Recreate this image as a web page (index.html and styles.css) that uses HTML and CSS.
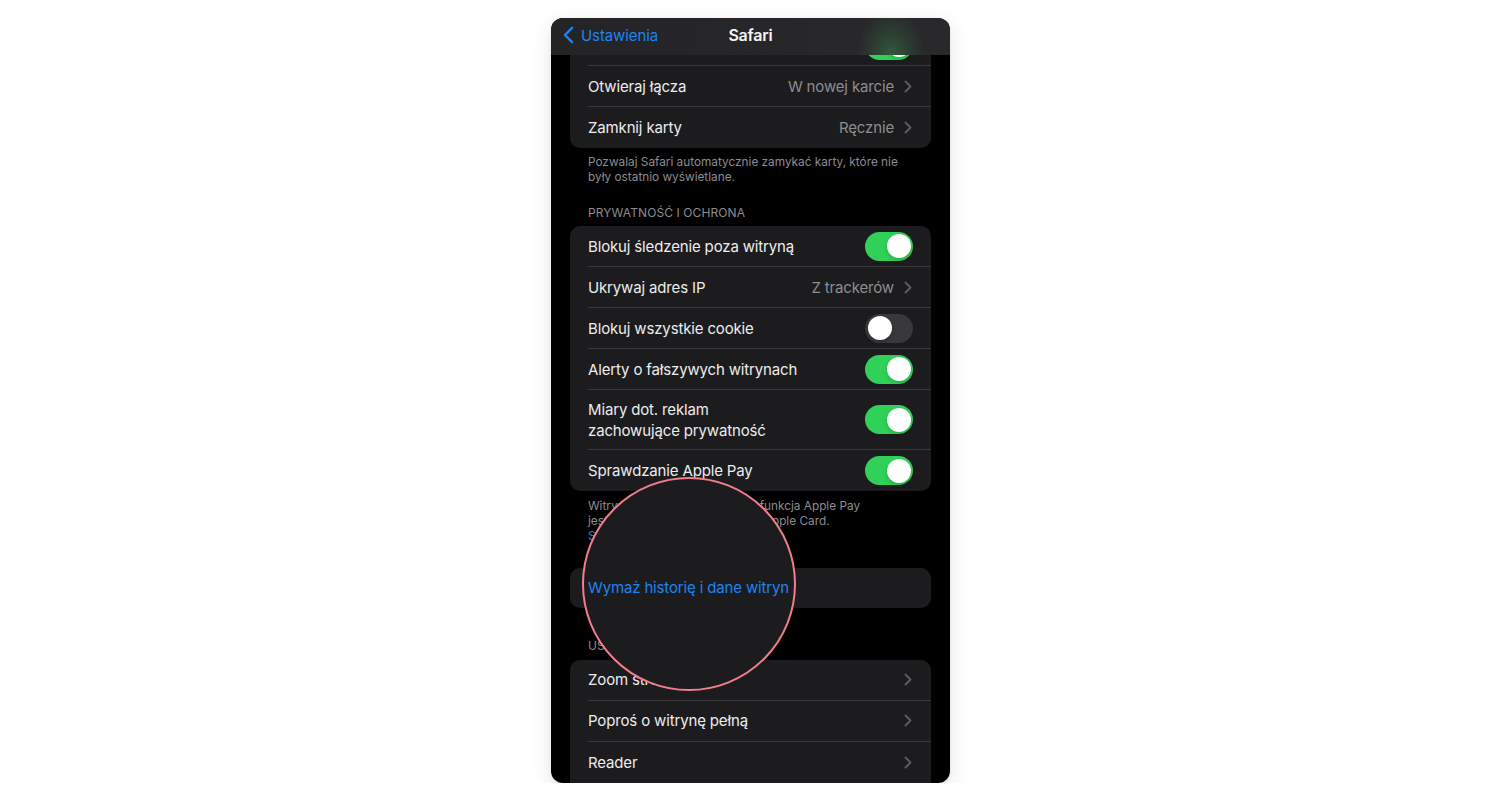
FILE: index.html
```html
<!DOCTYPE html>
<html lang="pl">
<head>
<meta charset="utf-8">
<title>Safari – Ustawienia</title>
<link rel="stylesheet" href="styles.css">
</head>
<body>
<div class="phone">
  <main class="content">
    <section class="group group-first">
      <div class="card">
        <div class="row"><div class="cell"><span class="label"></span><span class="toggle on" aria-label="Pokazuj ikony na kartach"></span></div></div>
        <div class="row"><div class="cell"><span class="label">Otwieraj łącza</span><span class="detail"><span class="value">W nowej karcie</span><svg class="chev" viewBox="0 0 8 13" width="8" height="13"><polyline points="1.5,1.5 6.5,6.5 1.5,11.5"/></svg></span></div></div>
        <div class="row"><div class="cell"><span class="label">Zamknij karty</span><span class="detail"><span class="value">Ręcznie</span><svg class="chev" viewBox="0 0 8 13" width="8" height="13"><polyline points="1.5,1.5 6.5,6.5 1.5,11.5"/></svg></span></div></div>
      </div>
      <p class="footer">Pozwalaj Safari automatycznie zamykać karty, które nie były ostatnio wyświetlane.</p>
    </section>

    <section class="group group-privacy">
      <h2 class="group-header">Prywatność i ochrona</h2>
      <div class="card">
        <div class="row"><div class="cell"><span class="label">Blokuj śledzenie poza witryną</span><span class="toggle on"></span></div></div>
        <div class="row"><div class="cell"><span class="label">Ukrywaj adres IP</span><span class="detail"><span class="value">Z trackerów</span><svg class="chev" viewBox="0 0 8 13" width="8" height="13"><polyline points="1.5,1.5 6.5,6.5 1.5,11.5"/></svg></span></div></div>
        <div class="row"><div class="cell"><span class="label">Blokuj wszystkie cookie</span><span class="toggle"></span></div></div>
        <div class="row"><div class="cell"><span class="label">Alerty o fałszywych witrynach</span><span class="toggle on"></span></div></div>
        <div class="row row-tall"><div class="cell"><span class="label">Miary dot. reklam<br>zachowujące prywatność</span><span class="toggle on"></span></div></div>
        <div class="row"><div class="cell"><span class="label">Sprawdzanie Apple Pay</span><span class="toggle on"></span></div></div>
      </div>
      <p class="footer">Witryny mogą sprawdzać, czy funkcja Apple Pay<br>jest włączona i czy masz konto Apple Card.<br><span class="link">Safari i prywatność…</span></p>
    </section>

    <section class="group group-clear">
      <div class="card">
        <div class="row row-short"><div class="cell"><span class="label action">Wymaż historię i dane witryn</span></div></div>
      </div>
    </section>

    <section class="group group-sites">
      <h2 class="group-header">Ustawienia dla witryn</h2>
      <div class="card">
        <div class="row"><div class="cell"><span class="label">Zoom strony</span><span class="detail"><svg class="chev" viewBox="0 0 8 13" width="8" height="13"><polyline points="1.5,1.5 6.5,6.5 1.5,11.5"/></svg></span></div></div>
        <div class="row"><div class="cell"><span class="label">Poproś o witrynę pełną</span><span class="detail"><svg class="chev" viewBox="0 0 8 13" width="8" height="13"><polyline points="1.5,1.5 6.5,6.5 1.5,11.5"/></svg></span></div></div>
        <div class="row"><div class="cell"><span class="label">Reader</span><span class="detail"><svg class="chev" viewBox="0 0 8 13" width="8" height="13"><polyline points="1.5,1.5 6.5,6.5 1.5,11.5"/></svg></span></div></div>
      </div>
    </section>
  </main>

  <header class="navbar">
    <a class="back">
      <svg class="back-chev" viewBox="0 0 12 20" width="12" height="20"><polyline points="10,2 2,10 10,18"/></svg>
      <span>Ustawienia</span>
    </a>
    <div class="title">Safari</div>
    <div></div>
  </header>

  <div class="spotlight"></div>
</div>
</body>
</html>
```

FILE: styles.css
```css
* { box-sizing: border-box; }

html, body {
  margin: 0;
  padding: 0;
  background: #ffffff;
}

body {
  font-family: Inter, "Noto Sans", "Liberation Sans", sans-serif;
  -webkit-font-smoothing: antialiased;
}

.phone {
  position: relative;
  width: 399px;
  height: 765px;
  margin: 18px 0 0 551px;
  background: #000000;
  border-radius: 12px;
  overflow: hidden;
  box-shadow: 0 6px 22px rgba(0, 0, 0, 0.10), 0 1px 4px rgba(0, 0, 0, 0.06);
}

/* ---------- navigation bar ---------- */
.navbar {
  position: absolute;
  top: 0;
  left: 0;
  right: 0;
  height: 37px;
  padding-bottom: 3px;
  display: grid;
  grid-template-columns: 1fr auto 1fr;
  align-items: center;
  background:
    radial-gradient(ellipse 34px 46px at 340px 100%, rgba(70, 190, 100, 0.32), rgba(70, 190, 100, 0.11) 60%, rgba(70, 190, 100, 0) 100%),
    linear-gradient(90deg, #242426 0%, #29292b 100%);
  z-index: 5;
}

.back {
  display: flex;
  align-items: center;
  gap: 7px;
  padding-left: 12px;
  color: #1e84f0;
  font-size: 15px;
  letter-spacing: -0.1px;
}

.back-chev {
  width: 11px;
  height: 18px;
  fill: none;
  stroke: #1e84f0;
  stroke-width: 2.6;
  stroke-linecap: round;
  stroke-linejoin: round;
}

.title {
  color: #f5f5f7;
  font-size: 16px;
  font-weight: 600;
  letter-spacing: -0.2px;
}

/* ---------- content ---------- */
.content {
  display: flex;
  flex-direction: column;
}

.group { margin: 0 19px; }
.group-first { margin-top: 7px; }
.group-privacy { margin-top: 20px; }
.group-clear { margin-top: 24px; }
.group-sites { margin-top: 30.5px; }

.group-header {
  margin: 0 18px 6.5px;
  font-size: 12px;
  line-height: 15px;
  font-weight: 400;
  text-transform: uppercase;
  color: #8c8c91;
  letter-spacing: 0.1px;
}

.footer {
  margin: 6.5px 18px 0;
  font-size: 11.8px;
  line-height: 15px;
  color: #8c8c91;
}

.group-privacy .footer { margin-top: 7.5px; }

.link { color: #1e84f0; }

.card {
  background: #1c1c1e;
  border-radius: 10px;
}

.group-sites .card { padding-bottom: 14px; }

.row {
  display: flex;
  height: 41px;
  padding-left: 18px;
}

.row-tall { height: 60px; }
.row-short { height: 40px; }

.cell {
  flex: 1;
  display: flex;
  align-items: center;
  justify-content: space-between;
  padding-right: 18px;
  border-bottom: 1px solid #38383a;
}

.row:last-child .cell { border-bottom: none; }

.label {
  color: #ececee;
  font-size: 15px;
  line-height: 21px;
  letter-spacing: -0.15px;
}

.label.action {
  position: relative;
  z-index: 3;
  color: #1e84f0;
}

.detail {
  display: flex;
  align-items: center;
  gap: 10px;
}

.value {
  color: #8d8d92;
  font-size: 15px;
  letter-spacing: -0.15px;
}

.chev {
  fill: none;
  stroke: #5d5d62;
  stroke-width: 1.8;
  stroke-linecap: round;
  stroke-linejoin: round;
  margin-right: 1px;
}

/* ---------- toggles ---------- */
.toggle {
  position: relative;
  width: 48px;
  height: 29px;
  border-radius: 15px;
  background: #39393d;
  flex-shrink: 0;
}

.toggle::after {
  content: "";
  position: absolute;
  top: 2.5px;
  left: 2.5px;
  width: 24px;
  height: 24px;
  border-radius: 50%;
  background: #ffffff;
  box-shadow: 0 2px 4px rgba(0, 0, 0, 0.18);
}

.toggle.on { background: #30d158; }
.toggle.on::after { left: 21.5px; }

/* ---------- spotlight circle ---------- */
.spotlight {
  position: absolute;
  left: 31px;
  top: 459px;
  width: 214px;
  height: 214px;
  border-radius: 50%;
  background: #1c1c1e;
  border: 2.5px solid #f27d8d;
  z-index: 2;
}
```
